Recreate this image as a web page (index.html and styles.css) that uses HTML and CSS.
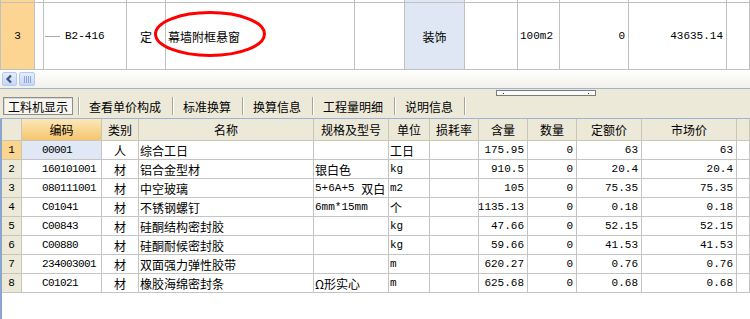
FILE: index.html
```html
<!DOCTYPE html>
<html lang="zh">
<head>
<meta charset="utf-8">
<title>工料机显示</title>
<link rel="stylesheet" href="styles.css">
</head>
<body>
<div class="top">
  <div class="tgrid">
    <div class="c rn"></div><div class="c"></div><div class="c"></div><div class="c"></div><div class="c"></div><div class="c"></div><div class="c blue"></div><div class="c"></div><div class="c"></div><div class="c"></div><div class="c"></div><div class="c"></div>
    <div class="c rn ctr m">3</div>
    <div class="c"></div>
    <div class="c code m"><span class="tree"></span>B2-416</div>
    <div class="c ding">定</div>
    <div class="c nm">幕墙附框悬窗</div>
    <div class="c"></div>
    <div class="c blue ctr">装饰</div>
    <div class="c"></div>
    <div class="c unit m">100m2</div>
    <div class="c rt m">0</div>
    <div class="c rt m">43635.14</div>
    <div class="c"></div>
  </div>
  <svg class="ring" width="115" height="49" viewBox="0 0 115 49"><ellipse cx="57" cy="24" rx="54.5" ry="21.5" fill="none" stroke="#f00" stroke-width="3"/></svg>
</div>
<div class="hscroll">
  <div class="sbtn"><svg width="13" height="12" viewBox="0 0 13 12"><path d="M8 2.5 L4.5 6 L8 9.5" fill="none" stroke="#3f5480" stroke-width="2.2"/></svg></div>
  <div class="sbtn thumb"><span></span><span></span><span></span><span></span></div>
</div>
<div class="mid">
  <div class="handle"><i></i><i></i></div>
  <div class="tabs">
    <div class="tab sel">工料机显示</div>
    <div class="tab">查看单价构成</div>
    <div class="tab">标准换算</div>
    <div class="tab">换算信息</div>
    <div class="tab">工程量明细</div>
    <div class="tab">说明信息</div>
    <div class="sep"></div>
  </div>
</div>
<div class="lower">
  <div class="bgrid">
    <div class="h"></div><div class="h hsel">编码</div><div class="h">类别</div><div class="h">名称</div><div class="h">规格及型号</div><div class="h">单位</div><div class="h">损耗率</div><div class="h">含量</div><div class="h">数量</div><div class="h">定额价</div><div class="h">市场价</div><div class="h"></div>

    <div class="d rn2 sel1 m">1</div><div class="d cd m cdsel">00001</div><div class="d ctr">人</div><div class="d tx">综合工日</div><div class="d tx"></div><div class="d tx">工日</div><div class="d"></div><div class="d rt m">175.95</div><div class="d rt m">0</div><div class="d rt m">63</div><div class="d rt m">63</div><div class="d"></div>

    <div class="d rn2 m">2</div><div class="d cd m">160101001</div><div class="d ctr">材</div><div class="d tx">铝合金型材</div><div class="d tx">银白色</div><div class="d tx m">kg</div><div class="d"></div><div class="d rt m">910.5</div><div class="d rt m">0</div><div class="d rt m">20.4</div><div class="d rt m">20.4</div><div class="d"></div>

    <div class="d rn2 m">3</div><div class="d cd m">080111001</div><div class="d ctr">材</div><div class="d tx">中空玻璃</div><div class="d tx"><span class="m">5+6A+5&nbsp;</span>双白</div><div class="d tx m">m2</div><div class="d"></div><div class="d rt m">105</div><div class="d rt m">0</div><div class="d rt m">75.35</div><div class="d rt m">75.35</div><div class="d"></div>

    <div class="d rn2 m">4</div><div class="d cd m">C01041</div><div class="d ctr">材</div><div class="d tx">不锈钢螺钉</div><div class="d tx m">6mm*15mm</div><div class="d tx">个</div><div class="d"></div><div class="d rt m">1135.13</div><div class="d rt m">0</div><div class="d rt m">0.18</div><div class="d rt m">0.18</div><div class="d"></div>

    <div class="d rn2 m">5</div><div class="d cd m">C00843</div><div class="d ctr">材</div><div class="d tx">硅酮结构密封胶</div><div class="d tx"></div><div class="d tx m">kg</div><div class="d"></div><div class="d rt m">47.66</div><div class="d rt m">0</div><div class="d rt m">52.15</div><div class="d rt m">52.15</div><div class="d"></div>

    <div class="d rn2 m">6</div><div class="d cd m">C00880</div><div class="d ctr">材</div><div class="d tx">硅酮耐候密封胶</div><div class="d tx"></div><div class="d tx m">kg</div><div class="d"></div><div class="d rt m">59.66</div><div class="d rt m">0</div><div class="d rt m">41.53</div><div class="d rt m">41.53</div><div class="d"></div>

    <div class="d rn2 m">7</div><div class="d cd m">234003001</div><div class="d ctr">材</div><div class="d tx">双面强力弹性胶带</div><div class="d tx"></div><div class="d tx m">m</div><div class="d"></div><div class="d rt m">620.27</div><div class="d rt m">0</div><div class="d rt m">0.76</div><div class="d rt m">0.76</div><div class="d"></div>

    <div class="d rn2 m">8</div><div class="d cd m">C01021</div><div class="d ctr">材</div><div class="d tx">橡胶海绵密封条</div><div class="d tx">Ω形实心</div><div class="d tx m">m</div><div class="d"></div><div class="d rt m">625.68</div><div class="d rt m">0</div><div class="d rt m">0.68</div><div class="d rt m">0.68</div><div class="d"></div>
  </div>
</div>
</body>
</html>
```
FILE: styles.css
```css
* { box-sizing: border-box; }
html, body { margin: 0; padding: 0; }
body {
  width: 750px;
  height: 319px;
  overflow: hidden;
  background: #ece9d8;
  font-family: "Noto Sans CJK SC", "Liberation Sans", sans-serif;
  font-size: 12px;
  color: #000;
}
.m { font-family: "Liberation Mono", "Noto Sans CJK SC", monospace; font-size: 11px; }

/* top grid */
.top { position: relative; height: 70px; background: #fff; border-left: 1px solid #c0c0c0; }
.tgrid {
  display: grid;
  grid-template-columns: 34px 9px 83px 39px 189px 50px 60px 53px 42px 69px 98px 23px;
  grid-template-rows: 3px 67px;
}
.c {
  border-right: 1px solid #c0c0c0;
  border-bottom: 1px solid #c0c0c0;
  display: flex;
  align-items: center;
  white-space: nowrap;
  overflow: hidden;
}
.rn { background: #fcd593; }
.blue { background: #dee7f3; }
.ctr { justify-content: center; }
.rt { justify-content: flex-end; padding-right: 3px; }
.code { padding-left: 1px; }
.tree { display: inline-block; width: 15px; height: 1px; background: #a8a8a8; margin-right: 5px; }
.ding { padding-left: 13px; }
.nm { padding-left: 2px; }
.unit { padding-left: 2px; }
.ring { position: absolute; left: 152px; top: 10px; }

/* scrollbar */
.hscroll {
  height: 19px;
  background: linear-gradient(#ffffff, #f1f0e9);
  display: flex;
  gap: 2px;
  padding: 2px 0 0 2px;
  border-bottom: 1px solid #9db3d3;
}
.sbtn {
  width: 15px;
  height: 14px;
  border: 1px solid #b7c8ef;
  border-radius: 2px;
  background: linear-gradient(#e6eefd, #c6d6f8);
  display: flex;
  align-items: center;
  justify-content: center;
}
.thumb { width: 16px; gap: 1px; }
.thumb span { width: 1px; height: 7px; background: #8ea6dc; }

/* middle pane with tabs */
.mid { height: 30px; padding-top: 1px; border-bottom: 1px solid #9db3d3; }
.handle {
  margin-left: 496px;
  width: 100px;
  height: 6px;
  border: 1px solid #7b7b7b;
  background: #fafaf7;
  display: flex;
  align-items: center;
  justify-content: space-between;
  padding: 0 6px;
}
.handle i { width: 1px; height: 1px; background: #1b2a9a; display: block; }
.tabs { display: flex; height: 18px; margin-top: 1px; padding-left: 3px; align-items: stretch; }
.tab {
  display: flex;
  align-items: center;
  padding: 0 11px 0 10px;
  border-left: 1px solid #a7a598;
  box-shadow: inset 1px 0 0 #fff;
  white-space: nowrap;
}
.tab.sel {
  width: 70px;
  justify-content: center;
  padding: 0;
  border: 1px solid #8d8d8d;
  box-shadow: inset 1px 1px 0 #dcdad0;
  background: #f6f5f0;
  margin-right: 5px;
}
.sep { border-left: 1px solid #a7a598; box-shadow: inset 1px 0 0 #fff; width: 2px; }

/* lower grid */
.lower { background: #fff; border-left: 2px solid #8aa6cf; height: 200px; }
.bgrid {
  display: grid;
  grid-template-columns: 20px 80px 37px 175px 75px 41px 49px 49px 49px 65px 95px 13px;
  grid-template-rows: 22px repeat(8, 19px);
}
.h, .d {
  border-right: 1px solid #c4c4c4;
  border-bottom: 1px solid #c4c4c4;
  display: flex;
  align-items: center;
  white-space: nowrap;
  overflow: hidden;
}
.h { background: #ece9d8; justify-content: center; border-color: #c9c6b6; }
.hsel { background: linear-gradient(#fde7b8, #f5c56e); }
.rn2 { background: #ece9d8; justify-content: center; border-color: #c9c6b6; }
.sel1 { background: #fbd58e; }
.cd { padding-left: 20px; letter-spacing: -0.6px; }
.cdsel { background: #dfe8f4; }
.tx { padding-left: 1px; }
```
